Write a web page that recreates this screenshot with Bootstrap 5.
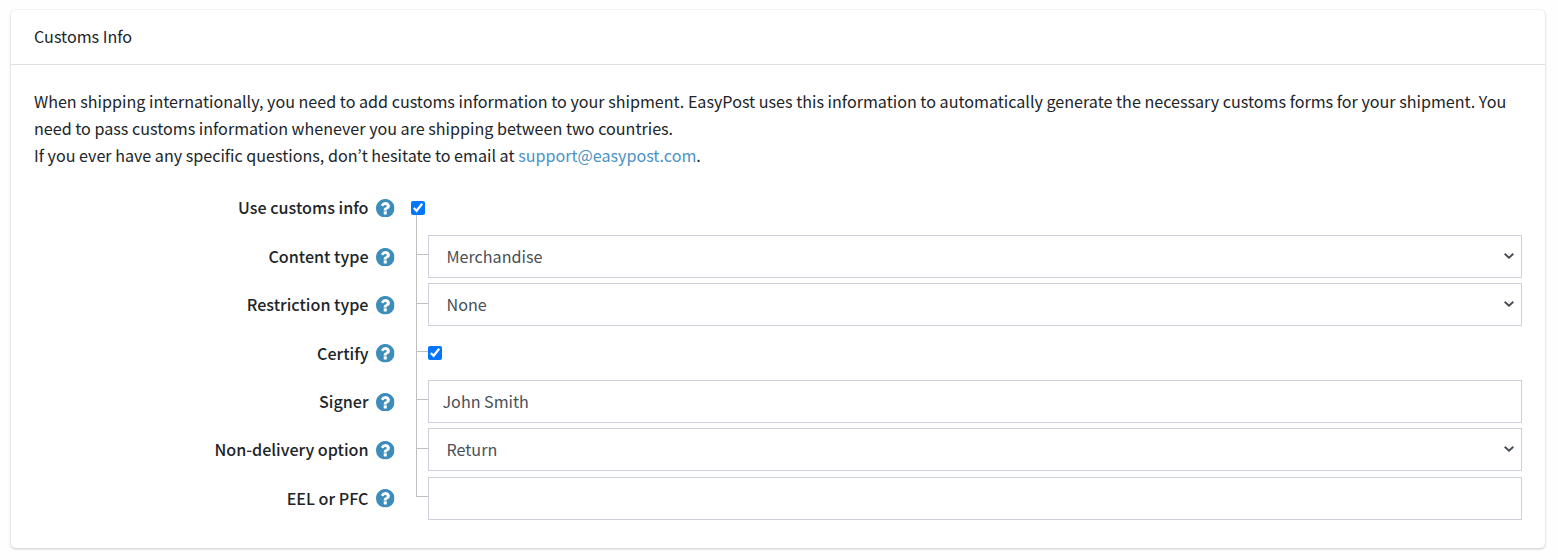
<!DOCTYPE html>
<html lang="en">
<head>
<meta charset="utf-8">
<meta name="viewport" content="width=device-width, initial-scale=1">
<title>Customs Info</title>
<link href="https://cdn.jsdelivr.net/npm/bootstrap@5.3.0/dist/css/bootstrap.min.css" rel="stylesheet">
<style>
  body { min-height: 560px; padding: 10px 13px 12px 11px; font-family: "Noto Sans CJK KR", "Noto Sans", sans-serif; font-size: 16.11px; line-height: 27px; color: #212529; background: #fefefe; }
  .customs-card { height: 538px; border: 0; border-radius: 4.5px; box-shadow: 0 0 1px rgba(0,0,0,.125), 0 1px 3px rgba(0,0,0,.2); background: #fff; }
  .customs-card > .card-header { height: 55px; padding: 13px 23px 0; background: transparent; border-bottom: 1px solid #dfdfdf; }
  .customs-card > .card-body { padding: 23px 23px 0; }
  .intro a { color: #4a93c4; text-decoration: none; }
  .customs-form { padding-top: 17px; }
  .field-row { height: 48.34px; }
  .field-label { width: 360px; height: 43px; font-weight: 500; color: #212529; }
  .help-icon { width: 18.5px; height: 18.5px; margin: 1px -0.5px 0 7.5px; flex: none; }
  .field-cell { position: relative; margin-left: 34px; height: 43px; }
  .first-row { height: 49px; }
  .first-row .field-cell { margin-left: 17px; }
  .first-row .field-cell::before { content: ""; position: absolute; left: 5px; top: 20px; width: 1px; height: 291px; background: #bfbfbf; }
  .field-row:not(.first-row) .field-cell::before { content: ""; position: absolute; left: -12px; top: 19.2px; width: 12px; height: 1px; background: #bfbfbf; }
  .field-box.form-control, .field-box.form-select { height: 43px; border: 1px solid #cfd1da; border-radius: 0; color: #495057; font-size: 16.11px; line-height: 27px; padding: 7px 14px; background-color: #fff; }
  .field-box.form-control { padding: 7px 13.5px; }
  .field-box.form-select { padding-left: 17.5px; background-image: url("data:image/svg+xml,%3csvg xmlns='http://www.w3.org/2000/svg' viewBox='0 0 10 6'%3e%3cpath fill='none' stroke='%23495057' stroke-width='2' d='M.7.8 5 4.7 9.3.8'/%3e%3c/svg%3e"); background-size: 10px 6px; background-position: right 7px top 17px; }
  .tick { display: block; position: relative; left: -0.3px; width: 14px; height: 14px; }
</style>
</head>
<body>
<svg class="d-none" xmlns="http://www.w3.org/2000/svg">
  <symbol id="help" viewBox="0 0 1536 1536"><path fill="#3c8dbc" d="M896 1248v-192q0-14-9-23t-23-9h-192q-14 0-23 9t-9 23v192q0 14 9 23t23 9h192q14 0 23-9t9-23zm256-672q0-88-55.500-163t-138.500-116-170-41q-243 0-371 213-15 24 8 42l132 100q7 6 19 6 16 0 25-12 53-68 86-92 34-24 86-24 48 0 85.500 26t37.500 59q0 38-20 61t-68 45q-63 28-115.500 86.500t-52.500 125.500v36q0 14 9 23t23 9h192q14 0 23-9t9-23q0-19 21.500-49.500t54.500-49.500q32-18 49-28.500t46-35 44.500-48 28-60.500 12.500-81zm384 192q0 209-103 385.500t-279.500 279.500-385.500 103-385.500-103-279.500-279.500-103-385.500 103-385.500 279.500-279.500 385.500-103 385.500 103 279.500 279.500 103 385.500z"/></symbol>
</svg>
<main class="card customs-card">
  <div class="card-header">Customs Info</div>
  <div class="card-body">
    <p class="intro mb-0">When shipping internationally, you need to add customs information to your shipment. EasyPost uses this information to automatically generate the necessary customs forms for your shipment. You need to pass customs information whenever you are shipping between two countries.<br>If you ever have any specific questions, don’t hesitate to email at <a href="#">support@easypost.com</a>.</p>
    <form class="customs-form">
      <div class="d-flex field-row first-row"><div class="field-label d-flex justify-content-end align-items-center">Use customs info<svg class="help-icon"><use href="#help"/></svg></div><div class="field-cell d-flex align-items-center"><input class="tick m-0" type="checkbox" checked></div></div>
      <div class="d-flex field-row"><div class="field-label d-flex justify-content-end align-items-center">Content type<svg class="help-icon"><use href="#help"/></svg></div><div class="field-cell flex-fill"><select class="form-select field-box"><option>Merchandise</option></select></div></div>
      <div class="d-flex field-row"><div class="field-label d-flex justify-content-end align-items-center">Restriction type<svg class="help-icon"><use href="#help"/></svg></div><div class="field-cell flex-fill"><select class="form-select field-box"><option>None</option></select></div></div>
      <div class="d-flex field-row"><div class="field-label d-flex justify-content-end align-items-center">Certify<svg class="help-icon"><use href="#help"/></svg></div><div class="field-cell d-flex align-items-center"><input class="tick m-0" type="checkbox" checked></div></div>
      <div class="d-flex field-row"><div class="field-label d-flex justify-content-end align-items-center">Signer<svg class="help-icon"><use href="#help"/></svg></div><div class="field-cell flex-fill"><input class="form-control field-box" type="text" value="John Smith"></div></div>
      <div class="d-flex field-row"><div class="field-label d-flex justify-content-end align-items-center">Non-delivery option<svg class="help-icon"><use href="#help"/></svg></div><div class="field-cell flex-fill"><select class="form-select field-box"><option>Return</option></select></div></div>
      <div class="d-flex field-row"><div class="field-label d-flex justify-content-end align-items-center">EEL or PFC<svg class="help-icon"><use href="#help"/></svg></div><div class="field-cell flex-fill"><input class="form-control field-box" type="text"></div></div>
    </form>
  </div>
</main>
<script src="https://cdn.jsdelivr.net/npm/bootstrap@5.3.0/dist/js/bootstrap.bundle.min.js"></script>
</body>
</html>
